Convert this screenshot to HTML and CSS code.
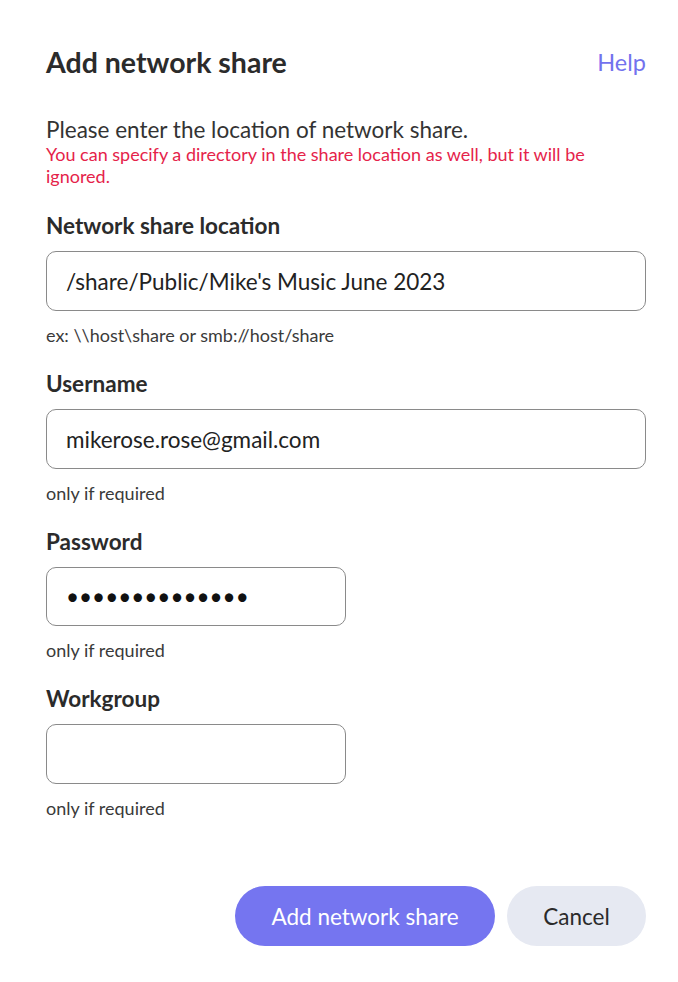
FILE: index.html
```html
<!DOCTYPE html>
<html lang="en">
<head>
    <meta charset="UTF-8">
    <meta name="viewport" content="width=device-width, initial-scale=1.0">
    <title>Add network share</title>
    <link rel="stylesheet" href="styles.css">
</head>
<body>
    <div class="dialog">
        <div class="dialog-header">
            <h1>Add network share</h1>
            <a class="help-link" href="#">Help</a>
        </div>

        <p class="intro">Please enter the location of network share.</p>
        <p class="warning">You can specify a directory in the share location as well, but it will be ignored.</p>

        <div class="field">
            <label for="location">Network share location</label>
            <input id="location" class="text-input" type="text" value="/share/Public/Mike's Music June 2023">
            <div class="hint">ex: \\host\share or smb://host/share</div>
        </div>

        <div class="field">
            <label for="username">Username</label>
            <input id="username" class="text-input" type="text" value="mikerose.rose@gmail.com">
            <div class="hint">only if required</div>
        </div>

        <div class="field">
            <label for="password">Password</label>
            <input id="password" class="text-input short" type="password" value="secretpass1234">
            <div class="hint">only if required</div>
        </div>

        <div class="field">
            <label for="workgroup">Workgroup</label>
            <input id="workgroup" class="text-input short tall" type="text" value="">
            <div class="hint">only if required</div>
        </div>

        <div class="actions">
            <button class="btn btn-primary">Add network share</button>
            <button class="btn btn-secondary">Cancel</button>
        </div>
    </div>
</body>
</html>
```

FILE: styles.css
```css
/* Base */
body {
    margin: 0;
    background: #fff;
    font-family: Lato, "Noto Sans", sans-serif;
    color: #2b2b2b;
}

.dialog {
    width: 600px;
    padding: 46px 32px 36px 46px;
}

/* Header */
.dialog-header {
    display: flex;
    justify-content: space-between;
    align-items: center;
    height: 32px;
}

.dialog-header h1 {
    margin: 0;
    font-size: 28.5px;
    font-weight: 700;
    line-height: 32px;
    color: #2b2b2b;
}

.help-link {
    font-size: 23.5px;
    color: #7372ee;
    text-decoration: none;
}

/* Intro text */
.intro {
    margin: 40px 0 1px;
    font-size: 22.5px;
    line-height: 24px;
    color: #333;
}

.warning {
    margin: 0 0 27px;
    font-size: 18px;
    line-height: 22px;
    color: #e5234a;
}

/* Fields */
.field {
    display: flex;
    flex-direction: column;
    align-items: flex-start;
    margin-bottom: 28px;
}

.field label {
    font-size: 22.5px;
    font-weight: 700;
    line-height: 24px;
    margin-bottom: 13px;
}

.text-input {
    box-sizing: border-box;
    width: 600px;
    height: 60px;
    padding: 0 19px;
    border: 1px solid #8a8a8a;
    border-radius: 10px;
    font-family: Lato, "Noto Sans", sans-serif;
    font-size: 22.5px;
    color: #222;
    outline: none;
}

.text-input.short {
    width: 300px;
    height: 59px;
}

.text-input.tall {
    height: 60px;
}

input[type="password"] {
    color: #111;
}

.hint {
    margin-top: 15px;
    font-size: 18px;
    line-height: 18px;
    color: #3a3a3a;
}

/* Buttons */
.actions {
    display: flex;
    justify-content: flex-end;
    gap: 12px;
    margin-top: 69px;
}

.btn {
    height: 60px;
    border: none;
    border-radius: 30px;
    font-family: Lato, "Noto Sans", sans-serif;
    font-size: 22.5px;
    cursor: pointer;
}

.btn-primary {
    width: 260px;
    background: #7575f0;
    color: #fff;
}

.btn-secondary {
    width: 139px;
    background: #e6e9f2;
    color: #2b2b2b;
}
```
